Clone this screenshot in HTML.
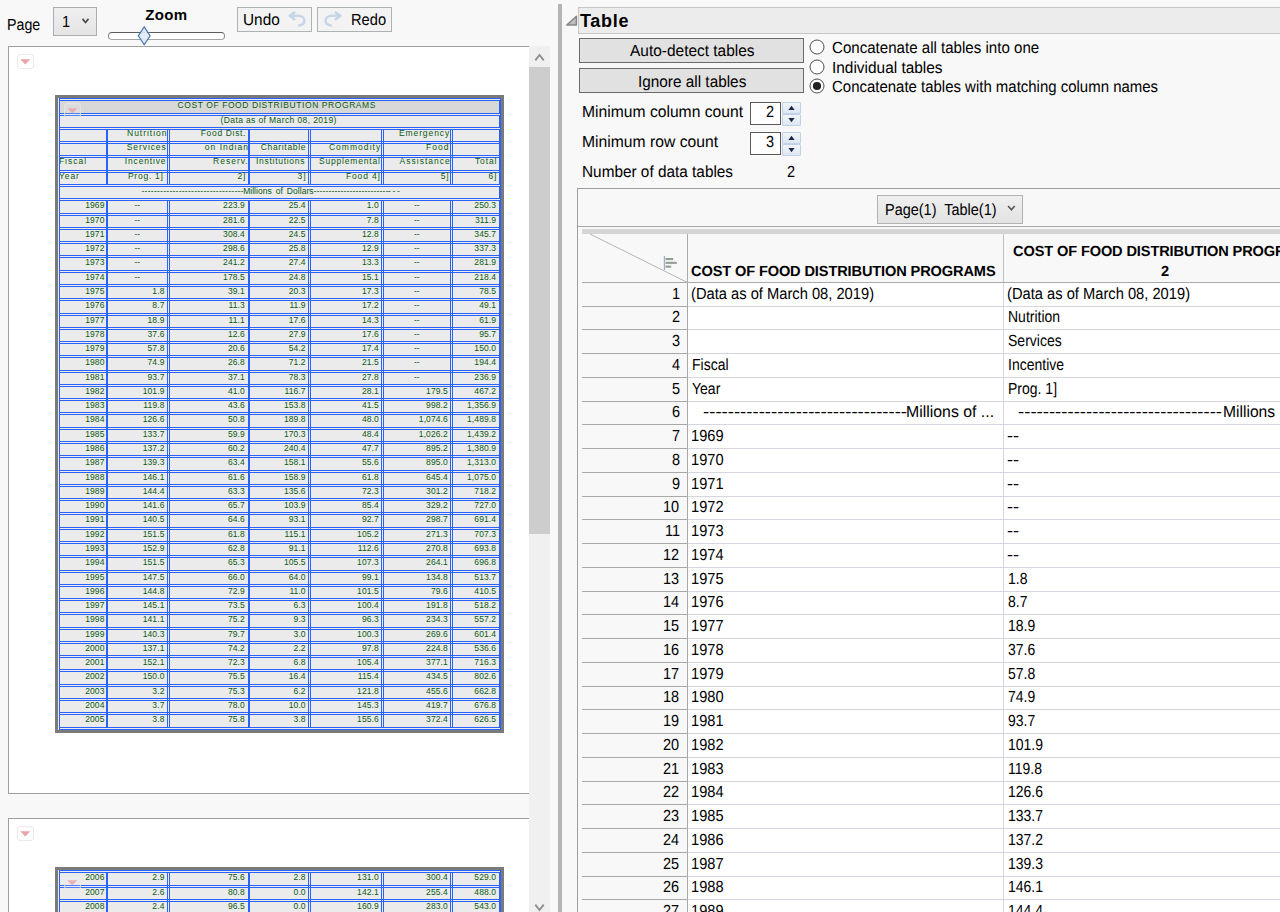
<!DOCTYPE html>
<html><head><meta charset="utf-8"><title>Table</title><style>
html,body{margin:0;padding:0}
body{width:1280px;height:912px;overflow:hidden;position:relative;background:#f8f8f8;font-family:'Liberation Sans', sans-serif;color:#000}
div,span,svg{position:absolute;box-sizing:border-box}
.t{white-space:pre;line-height:20px;height:20px;font-size:14px}
.c{border:1px solid #2962ff}
.h{font-size:16.1px;transform-origin:0 0}
.g{color:#0b5a14;font-size:8.5px}
</style></head><body>
<span class="t h" style="left:7.23px;top:13.52px;transform:scaleX(0.8855) skewX(.05deg);">Page</span>
<div style="left:53px;top:7px;width:44px;height:29px;border:1px solid #adadad;background:linear-gradient(#efefef,#e4e4e4)"></div>
<span class="t h" style="left:61.80px;top:11.32px;transform:scaleX(0.9006) skewX(.05deg);">1</span>
<svg style="left:81px;top:16.6px" width="10" height="8" viewBox="0 0 10 8"><path d="M1.5 1.9 L4.5 5.5 L7.5 1.9" fill="none" stroke="#4a4a4a" stroke-width="1.7"/></svg>
<span class="t" style="left:145.18px;top:4.80px;font-size:15px;font-weight:700;letter-spacing:0.357px;">Zoom</span>
<div style="left:108px;top:32px;width:117px;height:8px;border:1.5px solid #858585;border-top:1.2px solid #5c5c5c;border-bottom:1.8px solid #a4a4a4;border-radius:4px;background:#fff"></div>
<svg style="left:136px;top:25px" width="16" height="22" viewBox="0 0 16 22"><path d="M8.2 1.9 L14.1 10.8 L8.2 19.6 L2.3 10.8 Z" fill="#dfeaf8" fill-opacity="0.92" stroke="#4f7ab0" stroke-width="1.2"/></svg>
<div style="left:237px;top:7px;width:75px;height:25px;border:1px solid #adb2b5;background:#f3f3f3"></div>
<span class="t h" style="left:242.53px;top:9.42px;transform:scaleX(0.9547) skewX(.05deg);">Undo</span>
<svg style="left:287px;top:10px" width="20" height="18" viewBox="0 0 20 18"><path d="M7.3 2.4 L2.6 5.8 L7.3 9.3 M3.2 5.8 L11.4 5.8 C15 5.8 17.4 7.8 17.4 10.6 C17.4 13.2 15.2 15.1 12 15.5" fill="none" stroke="#c7d6e6" stroke-width="2.5" stroke-linecap="round" stroke-linejoin="round"/></svg>
<div style="left:317px;top:7px;width:75px;height:25px;border:1px solid #adb2b5;background:#f3f3f3"></div>
<svg style="left:323px;top:10px" width="20" height="18" viewBox="0 0 20 18"><g transform="translate(20 0) scale(-1 1)"><path d="M7.3 2.4 L2.6 5.8 L7.3 9.3 M3.2 5.8 L11.4 5.8 C15 5.8 17.4 7.8 17.4 10.6 C17.4 13.2 15.2 15.1 12 15.5" fill="none" stroke="#c7d6e6" stroke-width="2.5" stroke-linecap="round" stroke-linejoin="round"/></g></svg>
<span class="t h" style="left:350.73px;top:9.42px;transform:scaleX(0.9105) skewX(.05deg);">Redo</span>
<div style="left:0;top:0;width:529px;height:912px;overflow:hidden">
<div style="left:8px;top:46px;width:560px;height:748px;border:1px solid #a0a0a0;background:#fff"></div>
<div style="left:17px;top:54px;width:17px;height:15px;border:1px solid #e9e9e9;border-radius:3px;background:#fff;opacity:1.0"></div>
<svg style="left:20px;top:59px;opacity:1.0" width="11" height="6" viewBox="0 0 11 6"><path d="M0.3 0.3 L10.3 0.3 L5.3 5.6 Z" fill="#e9a3a9"/></svg>
<div style="left:55px;top:95px;width:449px;height:638px;background:#7a7a7a"></div>
<div style="left:58px;top:98px;width:443px;height:632px;background:#ebebeb"></div>
<div class="c" style="left:59px;top:98px;width:442px;height:632px"></div>
<div class="c" style="left:59px;top:100px;width:441px;height:14px;background:#d8d8d8;"></div>
<span class="t g" style="left:177.53px;top:95.15px;letter-spacing:0.579px;">COST OF FOOD DISTRIBUTION PROGRAMS</span>
<div class="c" style="left:59px;top:115px;width:441px;height:13px;"></div>
<span class="t g" style="left:220.53px;top:110.15px;letter-spacing:0.388px;">(Data as of March 08, 2019)</span>
<div class="c" style="left:59px;top:129px;width:441px;height:13px"></div>
<div class="c" style="left:59px;top:129px;width:48px;height:13px"></div>
<div class="c" style="left:107px;top:129px;width:61px;height:13px"></div>
<div class="c" style="left:169px;top:129px;width:80px;height:13px"></div>
<div class="c" style="left:249px;top:129px;width:60px;height:13px"></div>
<div class="c" style="left:310px;top:129px;width:72px;height:13px"></div>
<div class="c" style="left:383px;top:129px;width:68px;height:13px"></div>
<div class="c" style="left:452px;top:129px;width:48px;height:13px"></div>
<span class="t g" style="left:127.03px;top:123.05px;letter-spacing:0.972px;">Nutrition</span>
<span class="t g" style="left:200.78px;top:123.05px;letter-spacing:0.659px;">Food Dist.</span>
<span class="t g" style="left:398.93px;top:123.05px;letter-spacing:0.911px;">Emergency</span>
<div class="c" style="left:59px;top:143px;width:441px;height:13px"></div>
<div class="c" style="left:59px;top:143px;width:48px;height:13px"></div>
<div class="c" style="left:107px;top:143px;width:61px;height:13px"></div>
<div class="c" style="left:169px;top:143px;width:80px;height:13px"></div>
<div class="c" style="left:249px;top:143px;width:60px;height:13px"></div>
<div class="c" style="left:310px;top:143px;width:72px;height:13px"></div>
<div class="c" style="left:383px;top:143px;width:68px;height:13px"></div>
<div class="c" style="left:452px;top:143px;width:48px;height:13px"></div>
<span class="t g" style="left:126.73px;top:137.05px;letter-spacing:0.920px;">Services</span>
<span class="t g" style="left:204.78px;top:137.05px;letter-spacing:1.025px;">on Indian</span>
<span class="t g" style="left:260.78px;top:137.05px;letter-spacing:0.659px;">Charitable</span>
<span class="t g" style="left:328.93px;top:137.05px;letter-spacing:1.038px;">Commodity</span>
<span class="t g" style="left:426.03px;top:137.05px;letter-spacing:1.053px;">Food</span>
<div class="c" style="left:59px;top:157px;width:441px;height:14px"></div>
<div class="c" style="left:59px;top:157px;width:48px;height:14px"></div>
<div class="c" style="left:107px;top:157px;width:61px;height:14px"></div>
<div class="c" style="left:169px;top:157px;width:80px;height:14px"></div>
<div class="c" style="left:249px;top:157px;width:60px;height:14px"></div>
<div class="c" style="left:310px;top:157px;width:72px;height:14px"></div>
<div class="c" style="left:383px;top:157px;width:68px;height:14px"></div>
<div class="c" style="left:452px;top:157px;width:48px;height:14px"></div>
<span class="t g" style="left:58.93px;top:151.05px;letter-spacing:0.986px;">Fiscal</span>
<span class="t g" style="left:124.83px;top:151.05px;letter-spacing:0.825px;">Incentive</span>
<span class="t g" style="left:213.03px;top:151.05px;letter-spacing:1.005px;">Reserv.</span>
<span class="t g" style="left:256.03px;top:151.05px;letter-spacing:0.709px;">Institutions</span>
<span class="t g" style="left:318.93px;top:151.05px;letter-spacing:0.814px;">Supplemental</span>
<span class="t g" style="left:399.53px;top:151.05px;letter-spacing:1.025px;">Assistance</span>
<span class="t g" style="left:474.93px;top:151.05px;letter-spacing:0.892px;">Total</span>
<div class="c" style="left:59px;top:172px;width:441px;height:13px"></div>
<div class="c" style="left:59px;top:172px;width:48px;height:13px"></div>
<div class="c" style="left:107px;top:172px;width:61px;height:13px"></div>
<div class="c" style="left:169px;top:172px;width:80px;height:13px"></div>
<div class="c" style="left:249px;top:172px;width:60px;height:13px"></div>
<div class="c" style="left:310px;top:172px;width:72px;height:13px"></div>
<div class="c" style="left:383px;top:172px;width:68px;height:13px"></div>
<div class="c" style="left:452px;top:172px;width:48px;height:13px"></div>
<span class="t g" style="left:58.93px;top:166.05px;letter-spacing:0.949px;">Year</span>
<span class="t g" style="left:127.93px;top:166.05px;letter-spacing:0.751px;">Prog. 1]</span>
<span class="t g" style="left:237.53px;top:166.05px;letter-spacing:0.841px;">2]</span>
<span class="t g" style="left:297.53px;top:166.05px;letter-spacing:1.091px;">3]</span>
<span class="t g" style="left:346.03px;top:166.05px;letter-spacing:0.834px;">Food 4]</span>
<span class="t g" style="left:440.78px;top:166.05px;letter-spacing:0.691px;">5]</span>
<span class="t g" style="left:488.53px;top:166.05px;letter-spacing:0.841px;">6]</span>
<div class="c" style="left:59px;top:186px;width:441px;height:13px;"></div>
<div style="left:59px;top:129px;width:48px;height:56px;border-left:1px solid #2962ff;border-right:1px solid #2962ff"></div>
<div style="left:107px;top:129px;width:61px;height:56px;border-left:1px solid #2962ff;border-right:1px solid #2962ff"></div>
<div style="left:169px;top:129px;width:80px;height:56px;border-left:1px solid #2962ff;border-right:1px solid #2962ff"></div>
<div style="left:249px;top:129px;width:60px;height:56px;border-left:1px solid #2962ff;border-right:1px solid #2962ff"></div>
<div style="left:310px;top:129px;width:72px;height:56px;border-left:1px solid #2962ff;border-right:1px solid #2962ff"></div>
<div style="left:383px;top:129px;width:68px;height:56px;border-left:1px solid #2962ff;border-right:1px solid #2962ff"></div>
<div style="left:452px;top:129px;width:48px;height:56px;border-left:1px solid #2962ff;border-right:1px solid #2962ff"></div>
<div style="left:59px;top:200px;width:48px;height:528px;border-left:1px solid #2962ff;border-right:1px solid #2962ff"></div>
<div style="left:107px;top:200px;width:61px;height:528px;border-left:1px solid #2962ff;border-right:1px solid #2962ff"></div>
<div style="left:169px;top:200px;width:80px;height:528px;border-left:1px solid #2962ff;border-right:1px solid #2962ff"></div>
<div style="left:249px;top:200px;width:60px;height:528px;border-left:1px solid #2962ff;border-right:1px solid #2962ff"></div>
<div style="left:310px;top:200px;width:72px;height:528px;border-left:1px solid #2962ff;border-right:1px solid #2962ff"></div>
<div style="left:383px;top:200px;width:68px;height:528px;border-left:1px solid #2962ff;border-right:1px solid #2962ff"></div>
<div style="left:452px;top:200px;width:48px;height:528px;border-left:1px solid #2962ff;border-right:1px solid #2962ff"></div>
<div class="c" style="left:59px;top:200px;width:441px;height:14px"></div>
<div class="c" style="left:59px;top:200px;width:48px;height:14px"></div>
<div class="c" style="left:107px;top:200px;width:61px;height:14px"></div>
<div class="c" style="left:169px;top:200px;width:80px;height:14px"></div>
<div class="c" style="left:249px;top:200px;width:60px;height:14px"></div>
<div class="c" style="left:310px;top:200px;width:72px;height:14px"></div>
<div class="c" style="left:383px;top:200px;width:68px;height:14px"></div>
<div class="c" style="left:452px;top:200px;width:48px;height:14px"></div>
<span class="t g" style="left:85.18px;top:194.65px;letter-spacing:0.100px;">1969</span>
<span class="t g" style="left:134.46px;top:194.65px;">--</span>
<span class="t g" style="left:223.12px;top:194.65px;letter-spacing:0.100px;">223.9</span>
<span class="t g" style="left:288.75px;top:194.65px;letter-spacing:0.100px;">25.4</span>
<span class="t g" style="left:366.77px;top:194.65px;letter-spacing:0.100px;">1.0</span>
<span class="t g" style="left:413.96px;top:194.65px;">--</span>
<span class="t g" style="left:474.32px;top:194.65px;letter-spacing:0.100px;">250.3</span>
<div class="c" style="left:59px;top:215px;width:441px;height:13px"></div>
<div class="c" style="left:59px;top:215px;width:48px;height:13px"></div>
<div class="c" style="left:107px;top:215px;width:61px;height:13px"></div>
<div class="c" style="left:169px;top:215px;width:80px;height:13px"></div>
<div class="c" style="left:249px;top:215px;width:60px;height:13px"></div>
<div class="c" style="left:310px;top:215px;width:72px;height:13px"></div>
<div class="c" style="left:383px;top:215px;width:68px;height:13px"></div>
<div class="c" style="left:452px;top:215px;width:48px;height:13px"></div>
<span class="t g" style="left:85.18px;top:209.65px;letter-spacing:0.100px;">1970</span>
<span class="t g" style="left:134.46px;top:209.65px;">--</span>
<span class="t g" style="left:223.12px;top:209.65px;letter-spacing:0.100px;">281.6</span>
<span class="t g" style="left:288.75px;top:209.65px;letter-spacing:0.100px;">22.5</span>
<span class="t g" style="left:366.77px;top:209.65px;letter-spacing:0.100px;">7.8</span>
<span class="t g" style="left:413.96px;top:209.65px;">--</span>
<span class="t g" style="left:474.96px;top:209.65px;letter-spacing:0.100px;">311.9</span>
<div class="c" style="left:59px;top:229px;width:441px;height:13px"></div>
<div class="c" style="left:59px;top:229px;width:48px;height:13px"></div>
<div class="c" style="left:107px;top:229px;width:61px;height:13px"></div>
<div class="c" style="left:169px;top:229px;width:80px;height:13px"></div>
<div class="c" style="left:249px;top:229px;width:60px;height:13px"></div>
<div class="c" style="left:310px;top:229px;width:72px;height:13px"></div>
<div class="c" style="left:383px;top:229px;width:68px;height:13px"></div>
<div class="c" style="left:452px;top:229px;width:48px;height:13px"></div>
<span class="t g" style="left:85.18px;top:223.65px;letter-spacing:0.100px;">1971</span>
<span class="t g" style="left:134.46px;top:223.65px;">--</span>
<span class="t g" style="left:223.12px;top:223.65px;letter-spacing:0.100px;">308.4</span>
<span class="t g" style="left:288.75px;top:223.65px;letter-spacing:0.100px;">24.5</span>
<span class="t g" style="left:361.95px;top:223.65px;letter-spacing:0.100px;">12.8</span>
<span class="t g" style="left:413.96px;top:223.65px;">--</span>
<span class="t g" style="left:474.32px;top:223.65px;letter-spacing:0.100px;">345.7</span>
<div class="c" style="left:59px;top:243px;width:441px;height:13px"></div>
<div class="c" style="left:59px;top:243px;width:48px;height:13px"></div>
<div class="c" style="left:107px;top:243px;width:61px;height:13px"></div>
<div class="c" style="left:169px;top:243px;width:80px;height:13px"></div>
<div class="c" style="left:249px;top:243px;width:60px;height:13px"></div>
<div class="c" style="left:310px;top:243px;width:72px;height:13px"></div>
<div class="c" style="left:383px;top:243px;width:68px;height:13px"></div>
<div class="c" style="left:452px;top:243px;width:48px;height:13px"></div>
<span class="t g" style="left:85.18px;top:237.65px;letter-spacing:0.100px;">1972</span>
<span class="t g" style="left:134.46px;top:237.65px;">--</span>
<span class="t g" style="left:223.12px;top:237.65px;letter-spacing:0.100px;">298.6</span>
<span class="t g" style="left:288.75px;top:237.65px;letter-spacing:0.100px;">25.8</span>
<span class="t g" style="left:361.95px;top:237.65px;letter-spacing:0.100px;">12.9</span>
<span class="t g" style="left:413.96px;top:237.65px;">--</span>
<span class="t g" style="left:474.32px;top:237.65px;letter-spacing:0.100px;">337.3</span>
<div class="c" style="left:59px;top:257px;width:441px;height:14px"></div>
<div class="c" style="left:59px;top:257px;width:48px;height:14px"></div>
<div class="c" style="left:107px;top:257px;width:61px;height:14px"></div>
<div class="c" style="left:169px;top:257px;width:80px;height:14px"></div>
<div class="c" style="left:249px;top:257px;width:60px;height:14px"></div>
<div class="c" style="left:310px;top:257px;width:72px;height:14px"></div>
<div class="c" style="left:383px;top:257px;width:68px;height:14px"></div>
<div class="c" style="left:452px;top:257px;width:48px;height:14px"></div>
<span class="t g" style="left:85.18px;top:251.65px;letter-spacing:0.100px;">1973</span>
<span class="t g" style="left:134.46px;top:251.65px;">--</span>
<span class="t g" style="left:223.12px;top:251.65px;letter-spacing:0.100px;">241.2</span>
<span class="t g" style="left:288.75px;top:251.65px;letter-spacing:0.100px;">27.4</span>
<span class="t g" style="left:361.95px;top:251.65px;letter-spacing:0.100px;">13.3</span>
<span class="t g" style="left:413.96px;top:251.65px;">--</span>
<span class="t g" style="left:474.32px;top:251.65px;letter-spacing:0.100px;">281.9</span>
<div class="c" style="left:59px;top:272px;width:441px;height:13px"></div>
<div class="c" style="left:59px;top:272px;width:48px;height:13px"></div>
<div class="c" style="left:107px;top:272px;width:61px;height:13px"></div>
<div class="c" style="left:169px;top:272px;width:80px;height:13px"></div>
<div class="c" style="left:249px;top:272px;width:60px;height:13px"></div>
<div class="c" style="left:310px;top:272px;width:72px;height:13px"></div>
<div class="c" style="left:383px;top:272px;width:68px;height:13px"></div>
<div class="c" style="left:452px;top:272px;width:48px;height:13px"></div>
<span class="t g" style="left:85.18px;top:266.65px;letter-spacing:0.100px;">1974</span>
<span class="t g" style="left:134.46px;top:266.65px;">--</span>
<span class="t g" style="left:223.12px;top:266.65px;letter-spacing:0.100px;">178.5</span>
<span class="t g" style="left:288.75px;top:266.65px;letter-spacing:0.100px;">24.8</span>
<span class="t g" style="left:361.95px;top:266.65px;letter-spacing:0.100px;">15.1</span>
<span class="t g" style="left:413.96px;top:266.65px;">--</span>
<span class="t g" style="left:474.32px;top:266.65px;letter-spacing:0.100px;">218.4</span>
<div class="c" style="left:59px;top:286px;width:441px;height:13px"></div>
<div class="c" style="left:59px;top:286px;width:48px;height:13px"></div>
<div class="c" style="left:107px;top:286px;width:61px;height:13px"></div>
<div class="c" style="left:169px;top:286px;width:80px;height:13px"></div>
<div class="c" style="left:249px;top:286px;width:60px;height:13px"></div>
<div class="c" style="left:310px;top:286px;width:72px;height:13px"></div>
<div class="c" style="left:383px;top:286px;width:68px;height:13px"></div>
<div class="c" style="left:452px;top:286px;width:48px;height:13px"></div>
<span class="t g" style="left:85.18px;top:280.65px;letter-spacing:0.100px;">1975</span>
<span class="t g" style="left:152.37px;top:280.65px;letter-spacing:0.100px;">1.8</span>
<span class="t g" style="left:227.95px;top:280.65px;letter-spacing:0.100px;">39.1</span>
<span class="t g" style="left:288.75px;top:280.65px;letter-spacing:0.100px;">20.3</span>
<span class="t g" style="left:361.95px;top:280.65px;letter-spacing:0.100px;">17.3</span>
<span class="t g" style="left:413.96px;top:280.65px;">--</span>
<span class="t g" style="left:479.15px;top:280.65px;letter-spacing:0.100px;">78.5</span>
<div class="c" style="left:59px;top:300px;width:441px;height:14px"></div>
<div class="c" style="left:59px;top:300px;width:48px;height:14px"></div>
<div class="c" style="left:107px;top:300px;width:61px;height:14px"></div>
<div class="c" style="left:169px;top:300px;width:80px;height:14px"></div>
<div class="c" style="left:249px;top:300px;width:60px;height:14px"></div>
<div class="c" style="left:310px;top:300px;width:72px;height:14px"></div>
<div class="c" style="left:383px;top:300px;width:68px;height:14px"></div>
<div class="c" style="left:452px;top:300px;width:48px;height:14px"></div>
<span class="t g" style="left:85.18px;top:294.65px;letter-spacing:0.100px;">1976</span>
<span class="t g" style="left:152.37px;top:294.65px;letter-spacing:0.100px;">8.7</span>
<span class="t g" style="left:228.58px;top:294.65px;letter-spacing:0.100px;">11.3</span>
<span class="t g" style="left:289.38px;top:294.65px;letter-spacing:0.100px;">11.9</span>
<span class="t g" style="left:361.95px;top:294.65px;letter-spacing:0.100px;">17.2</span>
<span class="t g" style="left:413.96px;top:294.65px;">--</span>
<span class="t g" style="left:479.15px;top:294.65px;letter-spacing:0.100px;">49.1</span>
<div class="c" style="left:59px;top:315px;width:441px;height:13px"></div>
<div class="c" style="left:59px;top:315px;width:48px;height:13px"></div>
<div class="c" style="left:107px;top:315px;width:61px;height:13px"></div>
<div class="c" style="left:169px;top:315px;width:80px;height:13px"></div>
<div class="c" style="left:249px;top:315px;width:60px;height:13px"></div>
<div class="c" style="left:310px;top:315px;width:72px;height:13px"></div>
<div class="c" style="left:383px;top:315px;width:68px;height:13px"></div>
<div class="c" style="left:452px;top:315px;width:48px;height:13px"></div>
<span class="t g" style="left:85.18px;top:309.65px;letter-spacing:0.100px;">1977</span>
<span class="t g" style="left:147.55px;top:309.65px;letter-spacing:0.100px;">18.9</span>
<span class="t g" style="left:228.58px;top:309.65px;letter-spacing:0.100px;">11.1</span>
<span class="t g" style="left:288.75px;top:309.65px;letter-spacing:0.100px;">17.6</span>
<span class="t g" style="left:361.95px;top:309.65px;letter-spacing:0.100px;">14.3</span>
<span class="t g" style="left:413.96px;top:309.65px;">--</span>
<span class="t g" style="left:479.15px;top:309.65px;letter-spacing:0.100px;">61.9</span>
<div class="c" style="left:59px;top:329px;width:441px;height:13px"></div>
<div class="c" style="left:59px;top:329px;width:48px;height:13px"></div>
<div class="c" style="left:107px;top:329px;width:61px;height:13px"></div>
<div class="c" style="left:169px;top:329px;width:80px;height:13px"></div>
<div class="c" style="left:249px;top:329px;width:60px;height:13px"></div>
<div class="c" style="left:310px;top:329px;width:72px;height:13px"></div>
<div class="c" style="left:383px;top:329px;width:68px;height:13px"></div>
<div class="c" style="left:452px;top:329px;width:48px;height:13px"></div>
<span class="t g" style="left:85.18px;top:323.65px;letter-spacing:0.100px;">1978</span>
<span class="t g" style="left:147.55px;top:323.65px;letter-spacing:0.100px;">37.6</span>
<span class="t g" style="left:227.95px;top:323.65px;letter-spacing:0.100px;">12.6</span>
<span class="t g" style="left:288.75px;top:323.65px;letter-spacing:0.100px;">27.9</span>
<span class="t g" style="left:361.95px;top:323.65px;letter-spacing:0.100px;">17.6</span>
<span class="t g" style="left:413.96px;top:323.65px;">--</span>
<span class="t g" style="left:479.15px;top:323.65px;letter-spacing:0.100px;">95.7</span>
<div class="c" style="left:59px;top:343px;width:441px;height:13px"></div>
<div class="c" style="left:59px;top:343px;width:48px;height:13px"></div>
<div class="c" style="left:107px;top:343px;width:61px;height:13px"></div>
<div class="c" style="left:169px;top:343px;width:80px;height:13px"></div>
<div class="c" style="left:249px;top:343px;width:60px;height:13px"></div>
<div class="c" style="left:310px;top:343px;width:72px;height:13px"></div>
<div class="c" style="left:383px;top:343px;width:68px;height:13px"></div>
<div class="c" style="left:452px;top:343px;width:48px;height:13px"></div>
<span class="t g" style="left:85.18px;top:337.65px;letter-spacing:0.100px;">1979</span>
<span class="t g" style="left:147.55px;top:337.65px;letter-spacing:0.100px;">57.8</span>
<span class="t g" style="left:227.95px;top:337.65px;letter-spacing:0.100px;">20.6</span>
<span class="t g" style="left:288.75px;top:337.65px;letter-spacing:0.100px;">54.2</span>
<span class="t g" style="left:361.95px;top:337.65px;letter-spacing:0.100px;">17.4</span>
<span class="t g" style="left:413.96px;top:337.65px;">--</span>
<span class="t g" style="left:474.32px;top:337.65px;letter-spacing:0.100px;">150.0</span>
<div class="c" style="left:59px;top:357px;width:441px;height:14px"></div>
<div class="c" style="left:59px;top:357px;width:48px;height:14px"></div>
<div class="c" style="left:107px;top:357px;width:61px;height:14px"></div>
<div class="c" style="left:169px;top:357px;width:80px;height:14px"></div>
<div class="c" style="left:249px;top:357px;width:60px;height:14px"></div>
<div class="c" style="left:310px;top:357px;width:72px;height:14px"></div>
<div class="c" style="left:383px;top:357px;width:68px;height:14px"></div>
<div class="c" style="left:452px;top:357px;width:48px;height:14px"></div>
<span class="t g" style="left:85.18px;top:351.65px;letter-spacing:0.100px;">1980</span>
<span class="t g" style="left:147.55px;top:351.65px;letter-spacing:0.100px;">74.9</span>
<span class="t g" style="left:227.95px;top:351.65px;letter-spacing:0.100px;">26.8</span>
<span class="t g" style="left:288.75px;top:351.65px;letter-spacing:0.100px;">71.2</span>
<span class="t g" style="left:361.95px;top:351.65px;letter-spacing:0.100px;">21.5</span>
<span class="t g" style="left:413.96px;top:351.65px;">--</span>
<span class="t g" style="left:474.32px;top:351.65px;letter-spacing:0.100px;">194.4</span>
<div class="c" style="left:59px;top:372px;width:441px;height:13px"></div>
<div class="c" style="left:59px;top:372px;width:48px;height:13px"></div>
<div class="c" style="left:107px;top:372px;width:61px;height:13px"></div>
<div class="c" style="left:169px;top:372px;width:80px;height:13px"></div>
<div class="c" style="left:249px;top:372px;width:60px;height:13px"></div>
<div class="c" style="left:310px;top:372px;width:72px;height:13px"></div>
<div class="c" style="left:383px;top:372px;width:68px;height:13px"></div>
<div class="c" style="left:452px;top:372px;width:48px;height:13px"></div>
<span class="t g" style="left:85.18px;top:366.65px;letter-spacing:0.100px;">1981</span>
<span class="t g" style="left:147.55px;top:366.65px;letter-spacing:0.100px;">93.7</span>
<span class="t g" style="left:227.95px;top:366.65px;letter-spacing:0.100px;">37.1</span>
<span class="t g" style="left:288.75px;top:366.65px;letter-spacing:0.100px;">78.3</span>
<span class="t g" style="left:361.95px;top:366.65px;letter-spacing:0.100px;">27.8</span>
<span class="t g" style="left:413.96px;top:366.65px;">--</span>
<span class="t g" style="left:474.32px;top:366.65px;letter-spacing:0.100px;">236.9</span>
<div class="c" style="left:59px;top:386px;width:441px;height:13px"></div>
<div class="c" style="left:59px;top:386px;width:48px;height:13px"></div>
<div class="c" style="left:107px;top:386px;width:61px;height:13px"></div>
<div class="c" style="left:169px;top:386px;width:80px;height:13px"></div>
<div class="c" style="left:249px;top:386px;width:60px;height:13px"></div>
<div class="c" style="left:310px;top:386px;width:72px;height:13px"></div>
<div class="c" style="left:383px;top:386px;width:68px;height:13px"></div>
<div class="c" style="left:452px;top:386px;width:48px;height:13px"></div>
<span class="t g" style="left:85.18px;top:380.65px;letter-spacing:0.100px;">1982</span>
<span class="t g" style="left:142.72px;top:380.65px;letter-spacing:0.100px;">101.9</span>
<span class="t g" style="left:227.95px;top:380.65px;letter-spacing:0.100px;">41.0</span>
<span class="t g" style="left:284.56px;top:380.65px;letter-spacing:0.100px;">116.7</span>
<span class="t g" style="left:361.95px;top:380.65px;letter-spacing:0.100px;">28.1</span>
<span class="t g" style="left:426.12px;top:380.65px;letter-spacing:0.100px;">179.5</span>
<span class="t g" style="left:474.32px;top:380.65px;letter-spacing:0.100px;">467.2</span>
<div class="c" style="left:59px;top:400px;width:441px;height:13px"></div>
<div class="c" style="left:59px;top:400px;width:48px;height:13px"></div>
<div class="c" style="left:107px;top:400px;width:61px;height:13px"></div>
<div class="c" style="left:169px;top:400px;width:80px;height:13px"></div>
<div class="c" style="left:249px;top:400px;width:60px;height:13px"></div>
<div class="c" style="left:310px;top:400px;width:72px;height:13px"></div>
<div class="c" style="left:383px;top:400px;width:68px;height:13px"></div>
<div class="c" style="left:452px;top:400px;width:48px;height:13px"></div>
<span class="t g" style="left:85.18px;top:394.65px;letter-spacing:0.100px;">1983</span>
<span class="t g" style="left:143.36px;top:394.65px;letter-spacing:0.100px;">119.8</span>
<span class="t g" style="left:227.95px;top:394.65px;letter-spacing:0.100px;">43.6</span>
<span class="t g" style="left:283.92px;top:394.65px;letter-spacing:0.100px;">153.8</span>
<span class="t g" style="left:361.95px;top:394.65px;letter-spacing:0.100px;">41.5</span>
<span class="t g" style="left:426.12px;top:394.65px;letter-spacing:0.100px;">998.2</span>
<span class="t g" style="left:467.02px;top:394.65px;letter-spacing:0.100px;">1,356.9</span>
<div class="c" style="left:59px;top:414px;width:441px;height:14px"></div>
<div class="c" style="left:59px;top:414px;width:48px;height:14px"></div>
<div class="c" style="left:107px;top:414px;width:61px;height:14px"></div>
<div class="c" style="left:169px;top:414px;width:80px;height:14px"></div>
<div class="c" style="left:249px;top:414px;width:60px;height:14px"></div>
<div class="c" style="left:310px;top:414px;width:72px;height:14px"></div>
<div class="c" style="left:383px;top:414px;width:68px;height:14px"></div>
<div class="c" style="left:452px;top:414px;width:48px;height:14px"></div>
<span class="t g" style="left:85.18px;top:408.65px;letter-spacing:0.100px;">1984</span>
<span class="t g" style="left:142.72px;top:408.65px;letter-spacing:0.100px;">126.6</span>
<span class="t g" style="left:227.95px;top:408.65px;letter-spacing:0.100px;">50.8</span>
<span class="t g" style="left:283.92px;top:408.65px;letter-spacing:0.100px;">189.8</span>
<span class="t g" style="left:361.95px;top:408.65px;letter-spacing:0.100px;">48.0</span>
<span class="t g" style="left:418.82px;top:408.65px;letter-spacing:0.100px;">1,074.6</span>
<span class="t g" style="left:467.02px;top:408.65px;letter-spacing:0.100px;">1,489.8</span>
<div class="c" style="left:59px;top:429px;width:441px;height:13px"></div>
<div class="c" style="left:59px;top:429px;width:48px;height:13px"></div>
<div class="c" style="left:107px;top:429px;width:61px;height:13px"></div>
<div class="c" style="left:169px;top:429px;width:80px;height:13px"></div>
<div class="c" style="left:249px;top:429px;width:60px;height:13px"></div>
<div class="c" style="left:310px;top:429px;width:72px;height:13px"></div>
<div class="c" style="left:383px;top:429px;width:68px;height:13px"></div>
<div class="c" style="left:452px;top:429px;width:48px;height:13px"></div>
<span class="t g" style="left:85.18px;top:423.65px;letter-spacing:0.100px;">1985</span>
<span class="t g" style="left:142.72px;top:423.65px;letter-spacing:0.100px;">133.7</span>
<span class="t g" style="left:227.95px;top:423.65px;letter-spacing:0.100px;">59.9</span>
<span class="t g" style="left:283.92px;top:423.65px;letter-spacing:0.100px;">170.3</span>
<span class="t g" style="left:361.95px;top:423.65px;letter-spacing:0.100px;">48.4</span>
<span class="t g" style="left:418.82px;top:423.65px;letter-spacing:0.100px;">1,026.2</span>
<span class="t g" style="left:467.02px;top:423.65px;letter-spacing:0.100px;">1,439.2</span>
<div class="c" style="left:59px;top:443px;width:441px;height:13px"></div>
<div class="c" style="left:59px;top:443px;width:48px;height:13px"></div>
<div class="c" style="left:107px;top:443px;width:61px;height:13px"></div>
<div class="c" style="left:169px;top:443px;width:80px;height:13px"></div>
<div class="c" style="left:249px;top:443px;width:60px;height:13px"></div>
<div class="c" style="left:310px;top:443px;width:72px;height:13px"></div>
<div class="c" style="left:383px;top:443px;width:68px;height:13px"></div>
<div class="c" style="left:452px;top:443px;width:48px;height:13px"></div>
<span class="t g" style="left:85.18px;top:437.65px;letter-spacing:0.100px;">1986</span>
<span class="t g" style="left:142.72px;top:437.65px;letter-spacing:0.100px;">137.2</span>
<span class="t g" style="left:227.95px;top:437.65px;letter-spacing:0.100px;">60.2</span>
<span class="t g" style="left:283.92px;top:437.65px;letter-spacing:0.100px;">240.4</span>
<span class="t g" style="left:361.95px;top:437.65px;letter-spacing:0.100px;">47.7</span>
<span class="t g" style="left:426.12px;top:437.65px;letter-spacing:0.100px;">895.2</span>
<span class="t g" style="left:467.02px;top:437.65px;letter-spacing:0.100px;">1,380.9</span>
<div class="c" style="left:59px;top:457px;width:441px;height:14px"></div>
<div class="c" style="left:59px;top:457px;width:48px;height:14px"></div>
<div class="c" style="left:107px;top:457px;width:61px;height:14px"></div>
<div class="c" style="left:169px;top:457px;width:80px;height:14px"></div>
<div class="c" style="left:249px;top:457px;width:60px;height:14px"></div>
<div class="c" style="left:310px;top:457px;width:72px;height:14px"></div>
<div class="c" style="left:383px;top:457px;width:68px;height:14px"></div>
<div class="c" style="left:452px;top:457px;width:48px;height:14px"></div>
<span class="t g" style="left:85.18px;top:451.65px;letter-spacing:0.100px;">1987</span>
<span class="t g" style="left:142.72px;top:451.65px;letter-spacing:0.100px;">139.3</span>
<span class="t g" style="left:227.95px;top:451.65px;letter-spacing:0.100px;">63.4</span>
<span class="t g" style="left:283.92px;top:451.65px;letter-spacing:0.100px;">158.1</span>
<span class="t g" style="left:361.95px;top:451.65px;letter-spacing:0.100px;">55.6</span>
<span class="t g" style="left:426.12px;top:451.65px;letter-spacing:0.100px;">895.0</span>
<span class="t g" style="left:467.02px;top:451.65px;letter-spacing:0.100px;">1,313.0</span>
<div class="c" style="left:59px;top:472px;width:441px;height:13px"></div>
<div class="c" style="left:59px;top:472px;width:48px;height:13px"></div>
<div class="c" style="left:107px;top:472px;width:61px;height:13px"></div>
<div class="c" style="left:169px;top:472px;width:80px;height:13px"></div>
<div class="c" style="left:249px;top:472px;width:60px;height:13px"></div>
<div class="c" style="left:310px;top:472px;width:72px;height:13px"></div>
<div class="c" style="left:383px;top:472px;width:68px;height:13px"></div>
<div class="c" style="left:452px;top:472px;width:48px;height:13px"></div>
<span class="t g" style="left:85.18px;top:466.65px;letter-spacing:0.100px;">1988</span>
<span class="t g" style="left:142.72px;top:466.65px;letter-spacing:0.100px;">146.1</span>
<span class="t g" style="left:227.95px;top:466.65px;letter-spacing:0.100px;">61.6</span>
<span class="t g" style="left:283.92px;top:466.65px;letter-spacing:0.100px;">158.9</span>
<span class="t g" style="left:361.95px;top:466.65px;letter-spacing:0.100px;">61.8</span>
<span class="t g" style="left:426.12px;top:466.65px;letter-spacing:0.100px;">645.4</span>
<span class="t g" style="left:467.02px;top:466.65px;letter-spacing:0.100px;">1,075.0</span>
<div class="c" style="left:59px;top:486px;width:441px;height:13px"></div>
<div class="c" style="left:59px;top:486px;width:48px;height:13px"></div>
<div class="c" style="left:107px;top:486px;width:61px;height:13px"></div>
<div class="c" style="left:169px;top:486px;width:80px;height:13px"></div>
<div class="c" style="left:249px;top:486px;width:60px;height:13px"></div>
<div class="c" style="left:310px;top:486px;width:72px;height:13px"></div>
<div class="c" style="left:383px;top:486px;width:68px;height:13px"></div>
<div class="c" style="left:452px;top:486px;width:48px;height:13px"></div>
<span class="t g" style="left:85.18px;top:480.65px;letter-spacing:0.100px;">1989</span>
<span class="t g" style="left:142.72px;top:480.65px;letter-spacing:0.100px;">144.4</span>
<span class="t g" style="left:227.95px;top:480.65px;letter-spacing:0.100px;">63.3</span>
<span class="t g" style="left:283.92px;top:480.65px;letter-spacing:0.100px;">135.6</span>
<span class="t g" style="left:361.95px;top:480.65px;letter-spacing:0.100px;">72.3</span>
<span class="t g" style="left:426.12px;top:480.65px;letter-spacing:0.100px;">301.2</span>
<span class="t g" style="left:474.32px;top:480.65px;letter-spacing:0.100px;">718.2</span>
<div class="c" style="left:59px;top:500px;width:441px;height:13px"></div>
<div class="c" style="left:59px;top:500px;width:48px;height:13px"></div>
<div class="c" style="left:107px;top:500px;width:61px;height:13px"></div>
<div class="c" style="left:169px;top:500px;width:80px;height:13px"></div>
<div class="c" style="left:249px;top:500px;width:60px;height:13px"></div>
<div class="c" style="left:310px;top:500px;width:72px;height:13px"></div>
<div class="c" style="left:383px;top:500px;width:68px;height:13px"></div>
<div class="c" style="left:452px;top:500px;width:48px;height:13px"></div>
<span class="t g" style="left:85.18px;top:494.65px;letter-spacing:0.100px;">1990</span>
<span class="t g" style="left:142.72px;top:494.65px;letter-spacing:0.100px;">141.6</span>
<span class="t g" style="left:227.95px;top:494.65px;letter-spacing:0.100px;">65.7</span>
<span class="t g" style="left:283.92px;top:494.65px;letter-spacing:0.100px;">103.9</span>
<span class="t g" style="left:361.95px;top:494.65px;letter-spacing:0.100px;">85.4</span>
<span class="t g" style="left:426.12px;top:494.65px;letter-spacing:0.100px;">329.2</span>
<span class="t g" style="left:474.32px;top:494.65px;letter-spacing:0.100px;">727.0</span>
<div class="c" style="left:59px;top:514px;width:441px;height:14px"></div>
<div class="c" style="left:59px;top:514px;width:48px;height:14px"></div>
<div class="c" style="left:107px;top:514px;width:61px;height:14px"></div>
<div class="c" style="left:169px;top:514px;width:80px;height:14px"></div>
<div class="c" style="left:249px;top:514px;width:60px;height:14px"></div>
<div class="c" style="left:310px;top:514px;width:72px;height:14px"></div>
<div class="c" style="left:383px;top:514px;width:68px;height:14px"></div>
<div class="c" style="left:452px;top:514px;width:48px;height:14px"></div>
<span class="t g" style="left:85.18px;top:508.65px;letter-spacing:0.100px;">1991</span>
<span class="t g" style="left:142.72px;top:508.65px;letter-spacing:0.100px;">140.5</span>
<span class="t g" style="left:227.95px;top:508.65px;letter-spacing:0.100px;">64.6</span>
<span class="t g" style="left:288.75px;top:508.65px;letter-spacing:0.100px;">93.1</span>
<span class="t g" style="left:361.95px;top:508.65px;letter-spacing:0.100px;">92.7</span>
<span class="t g" style="left:426.12px;top:508.65px;letter-spacing:0.100px;">298.7</span>
<span class="t g" style="left:474.32px;top:508.65px;letter-spacing:0.100px;">691.4</span>
<div class="c" style="left:59px;top:529px;width:441px;height:13px"></div>
<div class="c" style="left:59px;top:529px;width:48px;height:13px"></div>
<div class="c" style="left:107px;top:529px;width:61px;height:13px"></div>
<div class="c" style="left:169px;top:529px;width:80px;height:13px"></div>
<div class="c" style="left:249px;top:529px;width:60px;height:13px"></div>
<div class="c" style="left:310px;top:529px;width:72px;height:13px"></div>
<div class="c" style="left:383px;top:529px;width:68px;height:13px"></div>
<div class="c" style="left:452px;top:529px;width:48px;height:13px"></div>
<span class="t g" style="left:85.18px;top:523.65px;letter-spacing:0.100px;">1992</span>
<span class="t g" style="left:142.72px;top:523.65px;letter-spacing:0.100px;">151.5</span>
<span class="t g" style="left:227.95px;top:523.65px;letter-spacing:0.100px;">61.8</span>
<span class="t g" style="left:284.56px;top:523.65px;letter-spacing:0.100px;">115.1</span>
<span class="t g" style="left:357.12px;top:523.65px;letter-spacing:0.100px;">105.2</span>
<span class="t g" style="left:426.12px;top:523.65px;letter-spacing:0.100px;">271.3</span>
<span class="t g" style="left:474.32px;top:523.65px;letter-spacing:0.100px;">707.3</span>
<div class="c" style="left:59px;top:543px;width:441px;height:13px"></div>
<div class="c" style="left:59px;top:543px;width:48px;height:13px"></div>
<div class="c" style="left:107px;top:543px;width:61px;height:13px"></div>
<div class="c" style="left:169px;top:543px;width:80px;height:13px"></div>
<div class="c" style="left:249px;top:543px;width:60px;height:13px"></div>
<div class="c" style="left:310px;top:543px;width:72px;height:13px"></div>
<div class="c" style="left:383px;top:543px;width:68px;height:13px"></div>
<div class="c" style="left:452px;top:543px;width:48px;height:13px"></div>
<span class="t g" style="left:85.18px;top:537.65px;letter-spacing:0.100px;">1993</span>
<span class="t g" style="left:142.72px;top:537.65px;letter-spacing:0.100px;">152.9</span>
<span class="t g" style="left:227.95px;top:537.65px;letter-spacing:0.100px;">62.8</span>
<span class="t g" style="left:288.75px;top:537.65px;letter-spacing:0.100px;">91.1</span>
<span class="t g" style="left:357.76px;top:537.65px;letter-spacing:0.100px;">112.6</span>
<span class="t g" style="left:426.12px;top:537.65px;letter-spacing:0.100px;">270.8</span>
<span class="t g" style="left:474.32px;top:537.65px;letter-spacing:0.100px;">693.8</span>
<div class="c" style="left:59px;top:557px;width:441px;height:14px"></div>
<div class="c" style="left:59px;top:557px;width:48px;height:14px"></div>
<div class="c" style="left:107px;top:557px;width:61px;height:14px"></div>
<div class="c" style="left:169px;top:557px;width:80px;height:14px"></div>
<div class="c" style="left:249px;top:557px;width:60px;height:14px"></div>
<div class="c" style="left:310px;top:557px;width:72px;height:14px"></div>
<div class="c" style="left:383px;top:557px;width:68px;height:14px"></div>
<div class="c" style="left:452px;top:557px;width:48px;height:14px"></div>
<span class="t g" style="left:85.18px;top:551.65px;letter-spacing:0.100px;">1994</span>
<span class="t g" style="left:142.72px;top:551.65px;letter-spacing:0.100px;">151.5</span>
<span class="t g" style="left:227.95px;top:551.65px;letter-spacing:0.100px;">65.3</span>
<span class="t g" style="left:283.92px;top:551.65px;letter-spacing:0.100px;">105.5</span>
<span class="t g" style="left:357.12px;top:551.65px;letter-spacing:0.100px;">107.3</span>
<span class="t g" style="left:426.12px;top:551.65px;letter-spacing:0.100px;">264.1</span>
<span class="t g" style="left:474.32px;top:551.65px;letter-spacing:0.100px;">696.8</span>
<div class="c" style="left:59px;top:572px;width:441px;height:13px"></div>
<div class="c" style="left:59px;top:572px;width:48px;height:13px"></div>
<div class="c" style="left:107px;top:572px;width:61px;height:13px"></div>
<div class="c" style="left:169px;top:572px;width:80px;height:13px"></div>
<div class="c" style="left:249px;top:572px;width:60px;height:13px"></div>
<div class="c" style="left:310px;top:572px;width:72px;height:13px"></div>
<div class="c" style="left:383px;top:572px;width:68px;height:13px"></div>
<div class="c" style="left:452px;top:572px;width:48px;height:13px"></div>
<span class="t g" style="left:85.18px;top:566.65px;letter-spacing:0.100px;">1995</span>
<span class="t g" style="left:142.72px;top:566.65px;letter-spacing:0.100px;">147.5</span>
<span class="t g" style="left:227.95px;top:566.65px;letter-spacing:0.100px;">66.0</span>
<span class="t g" style="left:288.75px;top:566.65px;letter-spacing:0.100px;">64.0</span>
<span class="t g" style="left:361.95px;top:566.65px;letter-spacing:0.100px;">99.1</span>
<span class="t g" style="left:426.12px;top:566.65px;letter-spacing:0.100px;">134.8</span>
<span class="t g" style="left:474.32px;top:566.65px;letter-spacing:0.100px;">513.7</span>
<div class="c" style="left:59px;top:586px;width:441px;height:13px"></div>
<div class="c" style="left:59px;top:586px;width:48px;height:13px"></div>
<div class="c" style="left:107px;top:586px;width:61px;height:13px"></div>
<div class="c" style="left:169px;top:586px;width:80px;height:13px"></div>
<div class="c" style="left:249px;top:586px;width:60px;height:13px"></div>
<div class="c" style="left:310px;top:586px;width:72px;height:13px"></div>
<div class="c" style="left:383px;top:586px;width:68px;height:13px"></div>
<div class="c" style="left:452px;top:586px;width:48px;height:13px"></div>
<span class="t g" style="left:85.18px;top:580.65px;letter-spacing:0.100px;">1996</span>
<span class="t g" style="left:142.72px;top:580.65px;letter-spacing:0.100px;">144.8</span>
<span class="t g" style="left:227.95px;top:580.65px;letter-spacing:0.100px;">72.9</span>
<span class="t g" style="left:289.38px;top:580.65px;letter-spacing:0.100px;">11.0</span>
<span class="t g" style="left:357.12px;top:580.65px;letter-spacing:0.100px;">101.5</span>
<span class="t g" style="left:430.95px;top:580.65px;letter-spacing:0.100px;">79.6</span>
<span class="t g" style="left:474.32px;top:580.65px;letter-spacing:0.100px;">410.5</span>
<div class="c" style="left:59px;top:600px;width:441px;height:13px"></div>
<div class="c" style="left:59px;top:600px;width:48px;height:13px"></div>
<div class="c" style="left:107px;top:600px;width:61px;height:13px"></div>
<div class="c" style="left:169px;top:600px;width:80px;height:13px"></div>
<div class="c" style="left:249px;top:600px;width:60px;height:13px"></div>
<div class="c" style="left:310px;top:600px;width:72px;height:13px"></div>
<div class="c" style="left:383px;top:600px;width:68px;height:13px"></div>
<div class="c" style="left:452px;top:600px;width:48px;height:13px"></div>
<span class="t g" style="left:85.18px;top:594.65px;letter-spacing:0.100px;">1997</span>
<span class="t g" style="left:142.72px;top:594.65px;letter-spacing:0.100px;">145.1</span>
<span class="t g" style="left:227.95px;top:594.65px;letter-spacing:0.100px;">73.5</span>
<span class="t g" style="left:293.57px;top:594.65px;letter-spacing:0.100px;">6.3</span>
<span class="t g" style="left:357.12px;top:594.65px;letter-spacing:0.100px;">100.4</span>
<span class="t g" style="left:426.12px;top:594.65px;letter-spacing:0.100px;">191.8</span>
<span class="t g" style="left:474.32px;top:594.65px;letter-spacing:0.100px;">518.2</span>
<div class="c" style="left:59px;top:614px;width:441px;height:14px"></div>
<div class="c" style="left:59px;top:614px;width:48px;height:14px"></div>
<div class="c" style="left:107px;top:614px;width:61px;height:14px"></div>
<div class="c" style="left:169px;top:614px;width:80px;height:14px"></div>
<div class="c" style="left:249px;top:614px;width:60px;height:14px"></div>
<div class="c" style="left:310px;top:614px;width:72px;height:14px"></div>
<div class="c" style="left:383px;top:614px;width:68px;height:14px"></div>
<div class="c" style="left:452px;top:614px;width:48px;height:14px"></div>
<span class="t g" style="left:85.18px;top:608.65px;letter-spacing:0.100px;">1998</span>
<span class="t g" style="left:142.72px;top:608.65px;letter-spacing:0.100px;">141.1</span>
<span class="t g" style="left:227.95px;top:608.65px;letter-spacing:0.100px;">75.2</span>
<span class="t g" style="left:293.57px;top:608.65px;letter-spacing:0.100px;">9.3</span>
<span class="t g" style="left:361.95px;top:608.65px;letter-spacing:0.100px;">96.3</span>
<span class="t g" style="left:426.12px;top:608.65px;letter-spacing:0.100px;">234.3</span>
<span class="t g" style="left:474.32px;top:608.65px;letter-spacing:0.100px;">557.2</span>
<div class="c" style="left:59px;top:629px;width:441px;height:13px"></div>
<div class="c" style="left:59px;top:629px;width:48px;height:13px"></div>
<div class="c" style="left:107px;top:629px;width:61px;height:13px"></div>
<div class="c" style="left:169px;top:629px;width:80px;height:13px"></div>
<div class="c" style="left:249px;top:629px;width:60px;height:13px"></div>
<div class="c" style="left:310px;top:629px;width:72px;height:13px"></div>
<div class="c" style="left:383px;top:629px;width:68px;height:13px"></div>
<div class="c" style="left:452px;top:629px;width:48px;height:13px"></div>
<span class="t g" style="left:85.18px;top:623.65px;letter-spacing:0.100px;">1999</span>
<span class="t g" style="left:142.72px;top:623.65px;letter-spacing:0.100px;">140.3</span>
<span class="t g" style="left:227.95px;top:623.65px;letter-spacing:0.100px;">79.7</span>
<span class="t g" style="left:293.57px;top:623.65px;letter-spacing:0.100px;">3.0</span>
<span class="t g" style="left:357.12px;top:623.65px;letter-spacing:0.100px;">100.3</span>
<span class="t g" style="left:426.12px;top:623.65px;letter-spacing:0.100px;">269.6</span>
<span class="t g" style="left:474.32px;top:623.65px;letter-spacing:0.100px;">601.4</span>
<div class="c" style="left:59px;top:643px;width:441px;height:13px"></div>
<div class="c" style="left:59px;top:643px;width:48px;height:13px"></div>
<div class="c" style="left:107px;top:643px;width:61px;height:13px"></div>
<div class="c" style="left:169px;top:643px;width:80px;height:13px"></div>
<div class="c" style="left:249px;top:643px;width:60px;height:13px"></div>
<div class="c" style="left:310px;top:643px;width:72px;height:13px"></div>
<div class="c" style="left:383px;top:643px;width:68px;height:13px"></div>
<div class="c" style="left:452px;top:643px;width:48px;height:13px"></div>
<span class="t g" style="left:85.18px;top:637.65px;letter-spacing:0.100px;">2000</span>
<span class="t g" style="left:142.72px;top:637.65px;letter-spacing:0.100px;">137.1</span>
<span class="t g" style="left:227.95px;top:637.65px;letter-spacing:0.100px;">74.2</span>
<span class="t g" style="left:293.57px;top:637.65px;letter-spacing:0.100px;">2.2</span>
<span class="t g" style="left:361.95px;top:637.65px;letter-spacing:0.100px;">97.8</span>
<span class="t g" style="left:426.12px;top:637.65px;letter-spacing:0.100px;">224.8</span>
<span class="t g" style="left:474.32px;top:637.65px;letter-spacing:0.100px;">536.6</span>
<div class="c" style="left:59px;top:657px;width:441px;height:13px"></div>
<div class="c" style="left:59px;top:657px;width:48px;height:13px"></div>
<div class="c" style="left:107px;top:657px;width:61px;height:13px"></div>
<div class="c" style="left:169px;top:657px;width:80px;height:13px"></div>
<div class="c" style="left:249px;top:657px;width:60px;height:13px"></div>
<div class="c" style="left:310px;top:657px;width:72px;height:13px"></div>
<div class="c" style="left:383px;top:657px;width:68px;height:13px"></div>
<div class="c" style="left:452px;top:657px;width:48px;height:13px"></div>
<span class="t g" style="left:85.18px;top:651.65px;letter-spacing:0.100px;">2001</span>
<span class="t g" style="left:142.72px;top:651.65px;letter-spacing:0.100px;">152.1</span>
<span class="t g" style="left:227.95px;top:651.65px;letter-spacing:0.100px;">72.3</span>
<span class="t g" style="left:293.57px;top:651.65px;letter-spacing:0.100px;">6.8</span>
<span class="t g" style="left:357.12px;top:651.65px;letter-spacing:0.100px;">105.4</span>
<span class="t g" style="left:426.12px;top:651.65px;letter-spacing:0.100px;">377.1</span>
<span class="t g" style="left:474.32px;top:651.65px;letter-spacing:0.100px;">716.3</span>
<div class="c" style="left:59px;top:671px;width:441px;height:14px"></div>
<div class="c" style="left:59px;top:671px;width:48px;height:14px"></div>
<div class="c" style="left:107px;top:671px;width:61px;height:14px"></div>
<div class="c" style="left:169px;top:671px;width:80px;height:14px"></div>
<div class="c" style="left:249px;top:671px;width:60px;height:14px"></div>
<div class="c" style="left:310px;top:671px;width:72px;height:14px"></div>
<div class="c" style="left:383px;top:671px;width:68px;height:14px"></div>
<div class="c" style="left:452px;top:671px;width:48px;height:14px"></div>
<span class="t g" style="left:85.18px;top:665.65px;letter-spacing:0.100px;">2002</span>
<span class="t g" style="left:142.72px;top:665.65px;letter-spacing:0.100px;">150.0</span>
<span class="t g" style="left:227.95px;top:665.65px;letter-spacing:0.100px;">75.5</span>
<span class="t g" style="left:288.75px;top:665.65px;letter-spacing:0.100px;">16.4</span>
<span class="t g" style="left:357.76px;top:665.65px;letter-spacing:0.100px;">115.4</span>
<span class="t g" style="left:426.12px;top:665.65px;letter-spacing:0.100px;">434.5</span>
<span class="t g" style="left:474.32px;top:665.65px;letter-spacing:0.100px;">802.6</span>
<div class="c" style="left:59px;top:686px;width:441px;height:13px"></div>
<div class="c" style="left:59px;top:686px;width:48px;height:13px"></div>
<div class="c" style="left:107px;top:686px;width:61px;height:13px"></div>
<div class="c" style="left:169px;top:686px;width:80px;height:13px"></div>
<div class="c" style="left:249px;top:686px;width:60px;height:13px"></div>
<div class="c" style="left:310px;top:686px;width:72px;height:13px"></div>
<div class="c" style="left:383px;top:686px;width:68px;height:13px"></div>
<div class="c" style="left:452px;top:686px;width:48px;height:13px"></div>
<span class="t g" style="left:85.18px;top:680.65px;letter-spacing:0.100px;">2003</span>
<span class="t g" style="left:152.37px;top:680.65px;letter-spacing:0.100px;">3.2</span>
<span class="t g" style="left:227.95px;top:680.65px;letter-spacing:0.100px;">75.3</span>
<span class="t g" style="left:293.57px;top:680.65px;letter-spacing:0.100px;">6.2</span>
<span class="t g" style="left:357.12px;top:680.65px;letter-spacing:0.100px;">121.8</span>
<span class="t g" style="left:426.12px;top:680.65px;letter-spacing:0.100px;">455.6</span>
<span class="t g" style="left:474.32px;top:680.65px;letter-spacing:0.100px;">662.8</span>
<div class="c" style="left:59px;top:700px;width:441px;height:13px"></div>
<div class="c" style="left:59px;top:700px;width:48px;height:13px"></div>
<div class="c" style="left:107px;top:700px;width:61px;height:13px"></div>
<div class="c" style="left:169px;top:700px;width:80px;height:13px"></div>
<div class="c" style="left:249px;top:700px;width:60px;height:13px"></div>
<div class="c" style="left:310px;top:700px;width:72px;height:13px"></div>
<div class="c" style="left:383px;top:700px;width:68px;height:13px"></div>
<div class="c" style="left:452px;top:700px;width:48px;height:13px"></div>
<span class="t g" style="left:85.18px;top:694.65px;letter-spacing:0.100px;">2004</span>
<span class="t g" style="left:152.37px;top:694.65px;letter-spacing:0.100px;">3.7</span>
<span class="t g" style="left:227.95px;top:694.65px;letter-spacing:0.100px;">78.0</span>
<span class="t g" style="left:288.75px;top:694.65px;letter-spacing:0.100px;">10.0</span>
<span class="t g" style="left:357.12px;top:694.65px;letter-spacing:0.100px;">145.3</span>
<span class="t g" style="left:426.12px;top:694.65px;letter-spacing:0.100px;">419.7</span>
<span class="t g" style="left:474.32px;top:694.65px;letter-spacing:0.100px;">676.8</span>
<div class="c" style="left:59px;top:714px;width:441px;height:14px"></div>
<div class="c" style="left:59px;top:714px;width:48px;height:14px"></div>
<div class="c" style="left:107px;top:714px;width:61px;height:14px"></div>
<div class="c" style="left:169px;top:714px;width:80px;height:14px"></div>
<div class="c" style="left:249px;top:714px;width:60px;height:14px"></div>
<div class="c" style="left:310px;top:714px;width:72px;height:14px"></div>
<div class="c" style="left:383px;top:714px;width:68px;height:14px"></div>
<div class="c" style="left:452px;top:714px;width:48px;height:14px"></div>
<span class="t g" style="left:85.18px;top:708.65px;letter-spacing:0.100px;">2005</span>
<span class="t g" style="left:152.37px;top:708.65px;letter-spacing:0.100px;">3.8</span>
<span class="t g" style="left:227.95px;top:708.65px;letter-spacing:0.100px;">75.8</span>
<span class="t g" style="left:293.57px;top:708.65px;letter-spacing:0.100px;">3.8</span>
<span class="t g" style="left:357.12px;top:708.65px;letter-spacing:0.100px;">155.6</span>
<span class="t g" style="left:426.12px;top:708.65px;letter-spacing:0.100px;">372.4</span>
<span class="t g" style="left:474.32px;top:708.65px;letter-spacing:0.100px;">626.5</span>
<span class="t g" style="left:141.53px;top:181.05px;letter-spacing:0.266px;">---------------------------------</span>
<span class="t g" style="left:243.13px;top:181.05px;letter-spacing:0.046px;word-spacing:1.5px;">Millions of Dollars</span>
<span class="t g" style="left:313.53px;top:181.05px;letter-spacing:0.174px;">-------------------------</span>
<span class="t g" style="left:388.03px;top:181.05px;letter-spacing:-0.321px;">- - -</span>
<div style="left:64px;top:103px;width:17px;height:15px;border:1px solid #e9e9e9;border-radius:3px;background:rgba(240,240,240,0.25);opacity:0.8"></div>
<svg style="left:67px;top:108px;opacity:0.8" width="11" height="6" viewBox="0 0 11 6"><path d="M0.3 0.3 L10.3 0.3 L5.3 5.6 Z" fill="#e9a3a9"/></svg>
<div style="left:8px;top:818px;width:560px;height:748px;border:1px solid #a0a0a0;background:#fff"></div>
<div style="left:17px;top:826px;width:17px;height:15px;border:1px solid #e9e9e9;border-radius:3px;background:#fff;opacity:1.0"></div>
<svg style="left:20px;top:831px;opacity:1.0" width="11" height="6" viewBox="0 0 11 6"><path d="M0.3 0.3 L10.3 0.3 L5.3 5.6 Z" fill="#e9a3a9"/></svg>
<div style="left:55px;top:867px;width:449px;height:65px;background:#7a7a7a"></div>
<div style="left:58px;top:870px;width:443px;height:59px;background:#ebebeb"></div>
<div class="c" style="left:59px;top:870px;width:442px;height:59px"></div>
<div style="left:59px;top:872px;width:48px;height:85px;border-left:1px solid #2962ff;border-right:1px solid #2962ff"></div>
<div style="left:107px;top:872px;width:61px;height:85px;border-left:1px solid #2962ff;border-right:1px solid #2962ff"></div>
<div style="left:169px;top:872px;width:80px;height:85px;border-left:1px solid #2962ff;border-right:1px solid #2962ff"></div>
<div style="left:249px;top:872px;width:60px;height:85px;border-left:1px solid #2962ff;border-right:1px solid #2962ff"></div>
<div style="left:310px;top:872px;width:72px;height:85px;border-left:1px solid #2962ff;border-right:1px solid #2962ff"></div>
<div style="left:383px;top:872px;width:68px;height:85px;border-left:1px solid #2962ff;border-right:1px solid #2962ff"></div>
<div style="left:452px;top:872px;width:48px;height:85px;border-left:1px solid #2962ff;border-right:1px solid #2962ff"></div>
<div class="c" style="left:59px;top:872px;width:441px;height:14px"></div>
<div class="c" style="left:59px;top:872px;width:48px;height:14px"></div>
<div class="c" style="left:107px;top:872px;width:61px;height:14px"></div>
<div class="c" style="left:169px;top:872px;width:80px;height:14px"></div>
<div class="c" style="left:249px;top:872px;width:60px;height:14px"></div>
<div class="c" style="left:310px;top:872px;width:72px;height:14px"></div>
<div class="c" style="left:383px;top:872px;width:68px;height:14px"></div>
<div class="c" style="left:452px;top:872px;width:48px;height:14px"></div>
<span class="t g" style="left:85.18px;top:866.65px;letter-spacing:0.100px;">2006</span>
<span class="t g" style="left:152.37px;top:866.65px;letter-spacing:0.100px;">2.9</span>
<span class="t g" style="left:227.95px;top:866.65px;letter-spacing:0.100px;">75.6</span>
<span class="t g" style="left:293.57px;top:866.65px;letter-spacing:0.100px;">2.8</span>
<span class="t g" style="left:357.12px;top:866.65px;letter-spacing:0.100px;">131.0</span>
<span class="t g" style="left:426.12px;top:866.65px;letter-spacing:0.100px;">300.4</span>
<span class="t g" style="left:474.32px;top:866.65px;letter-spacing:0.100px;">529.0</span>
<div class="c" style="left:59px;top:887px;width:441px;height:13px"></div>
<div class="c" style="left:59px;top:887px;width:48px;height:13px"></div>
<div class="c" style="left:107px;top:887px;width:61px;height:13px"></div>
<div class="c" style="left:169px;top:887px;width:80px;height:13px"></div>
<div class="c" style="left:249px;top:887px;width:60px;height:13px"></div>
<div class="c" style="left:310px;top:887px;width:72px;height:13px"></div>
<div class="c" style="left:383px;top:887px;width:68px;height:13px"></div>
<div class="c" style="left:452px;top:887px;width:48px;height:13px"></div>
<span class="t g" style="left:85.18px;top:881.65px;letter-spacing:0.100px;">2007</span>
<span class="t g" style="left:152.37px;top:881.65px;letter-spacing:0.100px;">2.6</span>
<span class="t g" style="left:227.95px;top:881.65px;letter-spacing:0.100px;">80.8</span>
<span class="t g" style="left:293.57px;top:881.65px;letter-spacing:0.100px;">0.0</span>
<span class="t g" style="left:357.12px;top:881.65px;letter-spacing:0.100px;">142.1</span>
<span class="t g" style="left:426.12px;top:881.65px;letter-spacing:0.100px;">255.4</span>
<span class="t g" style="left:474.32px;top:881.65px;letter-spacing:0.100px;">488.0</span>
<div class="c" style="left:59px;top:901px;width:441px;height:13px"></div>
<div class="c" style="left:59px;top:901px;width:48px;height:13px"></div>
<div class="c" style="left:107px;top:901px;width:61px;height:13px"></div>
<div class="c" style="left:169px;top:901px;width:80px;height:13px"></div>
<div class="c" style="left:249px;top:901px;width:60px;height:13px"></div>
<div class="c" style="left:310px;top:901px;width:72px;height:13px"></div>
<div class="c" style="left:383px;top:901px;width:68px;height:13px"></div>
<div class="c" style="left:452px;top:901px;width:48px;height:13px"></div>
<span class="t g" style="left:85.18px;top:895.65px;letter-spacing:0.100px;">2008</span>
<span class="t g" style="left:152.37px;top:895.65px;letter-spacing:0.100px;">2.4</span>
<span class="t g" style="left:227.95px;top:895.65px;letter-spacing:0.100px;">96.5</span>
<span class="t g" style="left:293.57px;top:895.65px;letter-spacing:0.100px;">0.0</span>
<span class="t g" style="left:357.12px;top:895.65px;letter-spacing:0.100px;">160.9</span>
<span class="t g" style="left:426.12px;top:895.65px;letter-spacing:0.100px;">283.0</span>
<span class="t g" style="left:474.32px;top:895.65px;letter-spacing:0.100px;">543.0</span>
<div style="left:64px;top:875px;width:17px;height:15px;border:1px solid #e9e9e9;border-radius:3px;background:rgba(240,240,240,0.25);opacity:0.8"></div>
<svg style="left:67px;top:880px;opacity:0.8" width="11" height="6" viewBox="0 0 11 6"><path d="M0.3 0.3 L10.3 0.3 L5.3 5.6 Z" fill="#e9a3a9"/></svg>
</div>
<div style="left:529px;top:46px;width:21px;height:866px;background:#f0f0f0"></div>
<div style="left:529px;top:67px;width:21px;height:467px;background:#cdcdcd"></div>
<svg style="left:534px;top:53px" width="11" height="9" viewBox="0 0 11 9"><path d="M1.3 7.4 L5.5 2 L9.7 7.4" fill="none" stroke="#8e8e8e" stroke-width="1.8"/></svg>
<svg style="left:534px;top:903px" width="11" height="9" viewBox="0 0 11 9"><path d="M1.3 1.6 L5.5 7 L9.7 1.6" fill="none" stroke="#8e8e8e" stroke-width="1.8"/></svg>
<div style="left:558px;top:4px;width:4px;height:908px;background:#b4b4b4"></div>
<svg style="left:564px;top:13px" width="15" height="15" viewBox="0 0 15 15"><path d="M12.4 3.2 L12.4 12 L2.8 12 Z" fill="#bfbfbf" stroke="#878787" stroke-width="1.5" stroke-linejoin="round"/></svg>
<div style="left:578px;top:7px;width:722px;height:27px;border:1px solid #c6c6c6;background:#ececec"></div>
<span class="t" style="left:580.01px;top:10.96px;font-size:18px;font-weight:700;letter-spacing:0.698px;">Table</span>
<div style="left:579px;top:38px;width:225px;height:25px;border:1px solid #6a6a6a;background:#e1e1e1"></div>
<span class="t h" style="left:629.73px;top:40.22px;transform:scaleX(0.9600) skewX(.05deg);">Auto-detect tables</span>
<div style="left:579px;top:68px;width:225px;height:25px;border:1px solid #6a6a6a;background:#e1e1e1"></div>
<span class="t h" style="left:637.56px;top:70.52px;transform:scaleX(0.9530) skewX(.05deg);">Ignore all tables</span>
<svg style="left:809.4px;top:39.2px" width="16" height="16" viewBox="0 0 16 16"><circle cx="8" cy="8" r="7" fill="#fff" stroke="#4d4d4d" stroke-width="1"/></svg>
<svg style="left:809.4px;top:59.2px" width="16" height="16" viewBox="0 0 16 16"><circle cx="8" cy="8" r="7" fill="#fff" stroke="#4d4d4d" stroke-width="1"/></svg>
<svg style="left:809.4px;top:78.2px" width="16" height="16" viewBox="0 0 16 16"><circle cx="8" cy="8" r="7" fill="#fff" stroke="#4d4d4d" stroke-width="1"/><circle cx="8" cy="8" r="4.1" fill="#222"/></svg>
<span class="t h" style="left:832.23px;top:36.52px;transform:scaleX(0.9373) skewX(.05deg);">Concatenate all tables into one</span>
<span class="t h" style="left:832.23px;top:57.02px;transform:scaleX(0.9577) skewX(.05deg);">Individual tables</span>
<span class="t h" style="left:832.23px;top:75.62px;transform:scaleX(0.9297) skewX(.05deg);">Concatenate tables with matching column names</span>
<span class="t h" style="left:581.73px;top:101.17px;transform:scaleX(0.9732) skewX(.05deg);">Minimum column count</span>
<span class="t h" style="left:581.73px;top:130.62px;transform:scaleX(0.9750) skewX(.05deg);">Minimum row count</span>
<span class="t h" style="left:581.73px;top:160.92px;transform:scaleX(0.9538) skewX(.05deg);">Number of data tables</span>
<div style="left:750px;top:102px;width:31px;height:23px;border:1px solid #5a5a5a;background:#fff"></div>
<span class="t h" style="left:765.94px;top:101.12px;transform:scaleX(0.9006) skewX(.05deg);">2</span>
<div style="left:782px;top:102px;width:19px;height:12px;border:1px solid #c3d1e6;background:linear-gradient(#f2f6fb,#dde6f3);border-radius:1px"></div>
<div style="left:782px;top:114px;width:19px;height:12px;border:1px solid #c3d1e6;background:linear-gradient(#f2f6fb,#dde6f3);border-radius:1px"></div>
<svg style="left:787px;top:105px" width="9" height="6" viewBox="0 0 9 6"><path d="M4.5 0.8 L7.6 4.9 L1.4 4.9 Z" fill="#1c2742"/></svg>
<svg style="left:787px;top:117px" width="9" height="6" viewBox="0 0 9 6"><path d="M4.5 5.2 L7.6 1.1 L1.4 1.1 Z" fill="#1c2742"/></svg>
<div style="left:750px;top:132px;width:31px;height:23px;border:1px solid #5a5a5a;background:#fff"></div>
<span class="t h" style="left:765.94px;top:131.12px;transform:scaleX(0.9006) skewX(.05deg);">3</span>
<div style="left:782px;top:132px;width:19px;height:12px;border:1px solid #c3d1e6;background:linear-gradient(#f2f6fb,#dde6f3);border-radius:1px"></div>
<div style="left:782px;top:144px;width:19px;height:12px;border:1px solid #c3d1e6;background:linear-gradient(#f2f6fb,#dde6f3);border-radius:1px"></div>
<svg style="left:787px;top:135px" width="9" height="6" viewBox="0 0 9 6"><path d="M4.5 0.8 L7.6 4.9 L1.4 4.9 Z" fill="#1c2742"/></svg>
<svg style="left:787px;top:147px" width="9" height="6" viewBox="0 0 9 6"><path d="M4.5 5.2 L7.6 1.1 L1.4 1.1 Z" fill="#1c2742"/></svg>
<span class="t h" style="left:787.00px;top:160.92px;transform:scaleX(0.9006) skewX(.05deg);">2</span>
<div style="left:577px;top:188px;width:723px;height:752px;border:1px solid #9e9e9e"></div>
<div style="left:877px;top:195px;width:146px;height:29px;border:1px solid #b2b2b2;background:linear-gradient(#efefef,#e3e3e3)"></div>
<span class="t h" style="left:884.53px;top:198.82px;transform:scaleX(0.8991) skewX(.05deg);">Page(1)  Table(1)</span>
<svg style="left:1006px;top:203.8px" width="10" height="8" viewBox="0 0 10 8"><path d="M2.1 1.9 L5.4 5.7 L8.7 1.9" fill="none" stroke="#555" stroke-width="1.6"/></svg>
<div style="left:578px;top:226px;width:722px;height:1px;background:#a8a8a8"></div>
<div style="left:582px;top:229px;width:718px;height:5px;background:#d5d5d5"></div>
<div style="left:688px;top:283px;width:612px;height:657px;background:#fff"></div>
<div style="left:687px;top:234px;width:1px;height:706px;background:#a9a9a9"></div>
<div style="left:1003px;top:234px;width:1px;height:49px;background:#bdbdbd"></div>
<div style="left:1003px;top:283px;width:1px;height:657px;background:#d6d6e2"></div>
<div style="left:582px;top:282px;width:718px;height:1px;background:#a9a9a9"></div>
<svg style="left:582px;top:234px" width="106" height="49" viewBox="0 0 106 49"><path d="M8 0 L105.5 48.5" stroke="#b4b4b4" stroke-width="1" fill="none"/></svg>
<svg style="left:663px;top:255px" width="16" height="16" viewBox="0 0 16 16"><rect x="0.8" y="1" width="1.3" height="14" fill="#a3acc8"/><rect x="2.6" y="3" width="7.6" height="2.1" fill="#8fa08f"/><rect x="2.6" y="6.8" width="11.2" height="2.1" fill="#8fa08f"/><rect x="2.6" y="10.6" width="5.6" height="2.1" fill="#8fa08f"/></svg>
<span class="t" style="left:691.20px;top:260.74px;font-size:14.6px;font-weight:700;letter-spacing:-0.130px;transform:skewX(.05deg);">COST OF FOOD DISTRIBUTION PROGRAMS</span>
<span class="t" style="left:1012.70px;top:240.74px;font-size:14.6px;font-weight:700;letter-spacing:-0.130px;transform:skewX(.05deg);">COST OF FOOD DISTRIBUTION PROGRAMS</span>
<span class="t" style="left:1161.14px;top:260.74px;font-size:14.6px;font-weight:700;transform:skewX(.05deg);">2</span>
<div style="left:582px;top:306px;width:105px;height:1px;background:#a9a9a9"></div>
<div style="left:688px;top:306px;width:612px;height:1px;background:#d6d6e2"></div>
<span class="t h" style="left:671.54px;top:282.62px;transform:scaleX(0.9006) skewX(.05deg);">1</span>
<span class="t h" style="left:691.23px;top:282.62px;transform:scaleX(0.9134) skewX(.05deg);">(Data as of March 08, 2019)</span>
<span class="t h" style="left:1006.93px;top:282.62px;transform:scaleX(0.9134) skewX(.05deg);">(Data as of March 08, 2019)</span>
<div style="left:582px;top:329px;width:105px;height:1px;background:#a9a9a9"></div>
<div style="left:688px;top:329px;width:612px;height:1px;background:#d6d6e2"></div>
<span class="t h" style="left:671.54px;top:306.37px;transform:scaleX(0.9006) skewX(.05deg);">2</span>
<span class="t h" style="left:1007.70px;top:306.37px;transform:scaleX(0.8696) skewX(.05deg);">Nutrition</span>
<div style="left:582px;top:353px;width:105px;height:1px;background:#a9a9a9"></div>
<div style="left:688px;top:353px;width:612px;height:1px;background:#d6d6e2"></div>
<span class="t h" style="left:671.54px;top:330.12px;transform:scaleX(0.9006) skewX(.05deg);">3</span>
<span class="t h" style="left:1007.70px;top:330.12px;transform:scaleX(0.8696) skewX(.05deg);">Services</span>
<div style="left:582px;top:377px;width:105px;height:1px;background:#a9a9a9"></div>
<div style="left:688px;top:377px;width:612px;height:1px;background:#d6d6e2"></div>
<span class="t h" style="left:671.54px;top:353.87px;transform:scaleX(0.9006) skewX(.05deg);">4</span>
<span class="t h" style="left:692.00px;top:353.87px;transform:scaleX(0.8696) skewX(.05deg);">Fiscal</span>
<span class="t h" style="left:1007.70px;top:353.87px;transform:scaleX(0.8696) skewX(.05deg);">Incentive</span>
<div style="left:582px;top:401px;width:105px;height:1px;background:#a9a9a9"></div>
<div style="left:688px;top:401px;width:612px;height:1px;background:#d6d6e2"></div>
<span class="t h" style="left:671.54px;top:377.62px;transform:scaleX(0.9006) skewX(.05deg);">5</span>
<span class="t h" style="left:692.00px;top:377.62px;transform:scaleX(0.8696) skewX(.05deg);">Year</span>
<span class="t h" style="left:1007.70px;top:377.62px;transform:scaleX(0.8696) skewX(.05deg);">Prog. 1]</span>
<div style="left:582px;top:424px;width:105px;height:1px;background:#a9a9a9"></div>
<div style="left:688px;top:424px;width:612px;height:1px;background:#d6d6e2"></div>
<span class="t h" style="left:671.54px;top:401.37px;transform:scaleX(0.9006) skewX(.05deg);">6</span>
<span class="t h" style="left:702.98px;top:401.37px;transform:scaleX(1.1537) skewX(.05deg);">---------------------------------</span>
<span class="t h" style="left:906.23px;top:401.37px;transform:scaleX(0.9844) skewX(.05deg);">Millions of ...</span>
<span class="t h" style="left:1018.23px;top:401.37px;transform:scaleX(1.1537) skewX(.05deg);">---------------------------------</span>
<span class="t h" style="left:1222.93px;top:401.37px;transform:scaleX(0.9696) skewX(.05deg);">Millions</span>
<span class="t h" style="left:1279.50px;top:401.37px;transform:scaleX(0.8696) skewX(.05deg);">of Dollars</span>
<div style="left:582px;top:448px;width:105px;height:1px;background:#a9a9a9"></div>
<div style="left:688px;top:448px;width:612px;height:1px;background:#d6d6e2"></div>
<span class="t h" style="left:671.54px;top:425.12px;transform:scaleX(0.9006) skewX(.05deg);">7</span>
<span class="t h" style="left:691.23px;top:425.12px;transform:scaleX(0.9086) skewX(.05deg);">1969</span>
<span class="t h" style="left:1006.93px;top:425.12px;transform:scaleX(1.1326) skewX(.05deg);">--</span>
<div style="left:582px;top:472px;width:105px;height:1px;background:#a9a9a9"></div>
<div style="left:688px;top:472px;width:612px;height:1px;background:#d6d6e2"></div>
<span class="t h" style="left:671.54px;top:448.87px;transform:scaleX(0.9006) skewX(.05deg);">8</span>
<span class="t h" style="left:691.23px;top:448.87px;transform:scaleX(0.9086) skewX(.05deg);">1970</span>
<span class="t h" style="left:1006.93px;top:448.87px;transform:scaleX(1.1326) skewX(.05deg);">--</span>
<div style="left:582px;top:496px;width:105px;height:1px;background:#a9a9a9"></div>
<div style="left:688px;top:496px;width:612px;height:1px;background:#d6d6e2"></div>
<span class="t h" style="left:671.54px;top:472.62px;transform:scaleX(0.9006) skewX(.05deg);">9</span>
<span class="t h" style="left:691.23px;top:472.62px;transform:scaleX(0.9086) skewX(.05deg);">1971</span>
<span class="t h" style="left:1006.93px;top:472.62px;transform:scaleX(1.1326) skewX(.05deg);">--</span>
<div style="left:582px;top:519px;width:105px;height:1px;background:#a9a9a9"></div>
<div style="left:688px;top:519px;width:612px;height:1px;background:#d6d6e2"></div>
<span class="t h" style="left:663.47px;top:496.37px;transform:scaleX(0.9006) skewX(.05deg);">10</span>
<span class="t h" style="left:691.23px;top:496.37px;transform:scaleX(0.9086) skewX(.05deg);">1972</span>
<span class="t h" style="left:1006.93px;top:496.37px;transform:scaleX(1.1326) skewX(.05deg);">--</span>
<div style="left:582px;top:543px;width:105px;height:1px;background:#a9a9a9"></div>
<div style="left:688px;top:543px;width:612px;height:1px;background:#d6d6e2"></div>
<span class="t h" style="left:664.54px;top:520.12px;transform:scaleX(0.9006) skewX(.05deg);">11</span>
<span class="t h" style="left:691.23px;top:520.12px;transform:scaleX(0.9086) skewX(.05deg);">1973</span>
<span class="t h" style="left:1006.93px;top:520.12px;transform:scaleX(1.1326) skewX(.05deg);">--</span>
<div style="left:582px;top:567px;width:105px;height:1px;background:#a9a9a9"></div>
<div style="left:688px;top:567px;width:612px;height:1px;background:#d6d6e2"></div>
<span class="t h" style="left:663.47px;top:543.87px;transform:scaleX(0.9006) skewX(.05deg);">12</span>
<span class="t h" style="left:691.23px;top:543.87px;transform:scaleX(0.9086) skewX(.05deg);">1974</span>
<span class="t h" style="left:1006.93px;top:543.87px;transform:scaleX(1.1326) skewX(.05deg);">--</span>
<div style="left:582px;top:591px;width:105px;height:1px;background:#a9a9a9"></div>
<div style="left:688px;top:591px;width:612px;height:1px;background:#d6d6e2"></div>
<span class="t h" style="left:663.47px;top:567.62px;transform:scaleX(0.9006) skewX(.05deg);">13</span>
<span class="t h" style="left:691.23px;top:567.62px;transform:scaleX(0.9086) skewX(.05deg);">1975</span>
<span class="t h" style="left:1007.70px;top:567.62px;transform:scaleX(0.8696) skewX(.05deg);">1.8</span>
<div style="left:582px;top:614px;width:105px;height:1px;background:#a9a9a9"></div>
<div style="left:688px;top:614px;width:612px;height:1px;background:#d6d6e2"></div>
<span class="t h" style="left:663.47px;top:591.37px;transform:scaleX(0.9006) skewX(.05deg);">14</span>
<span class="t h" style="left:691.23px;top:591.37px;transform:scaleX(0.9086) skewX(.05deg);">1976</span>
<span class="t h" style="left:1007.70px;top:591.37px;transform:scaleX(0.8696) skewX(.05deg);">8.7</span>
<div style="left:582px;top:638px;width:105px;height:1px;background:#a9a9a9"></div>
<div style="left:688px;top:638px;width:612px;height:1px;background:#d6d6e2"></div>
<span class="t h" style="left:663.47px;top:615.12px;transform:scaleX(0.9006) skewX(.05deg);">15</span>
<span class="t h" style="left:691.23px;top:615.12px;transform:scaleX(0.9086) skewX(.05deg);">1977</span>
<span class="t h" style="left:1007.70px;top:615.12px;transform:scaleX(0.8696) skewX(.05deg);">18.9</span>
<div style="left:582px;top:662px;width:105px;height:1px;background:#a9a9a9"></div>
<div style="left:688px;top:662px;width:612px;height:1px;background:#d6d6e2"></div>
<span class="t h" style="left:663.47px;top:638.87px;transform:scaleX(0.9006) skewX(.05deg);">16</span>
<span class="t h" style="left:691.23px;top:638.87px;transform:scaleX(0.9086) skewX(.05deg);">1978</span>
<span class="t h" style="left:1007.70px;top:638.87px;transform:scaleX(0.8696) skewX(.05deg);">37.6</span>
<div style="left:582px;top:686px;width:105px;height:1px;background:#a9a9a9"></div>
<div style="left:688px;top:686px;width:612px;height:1px;background:#d6d6e2"></div>
<span class="t h" style="left:663.47px;top:662.62px;transform:scaleX(0.9006) skewX(.05deg);">17</span>
<span class="t h" style="left:691.23px;top:662.62px;transform:scaleX(0.9086) skewX(.05deg);">1979</span>
<span class="t h" style="left:1007.70px;top:662.62px;transform:scaleX(0.8696) skewX(.05deg);">57.8</span>
<div style="left:582px;top:709px;width:105px;height:1px;background:#a9a9a9"></div>
<div style="left:688px;top:709px;width:612px;height:1px;background:#d6d6e2"></div>
<span class="t h" style="left:663.47px;top:686.37px;transform:scaleX(0.9006) skewX(.05deg);">18</span>
<span class="t h" style="left:691.23px;top:686.37px;transform:scaleX(0.9086) skewX(.05deg);">1980</span>
<span class="t h" style="left:1007.70px;top:686.37px;transform:scaleX(0.8696) skewX(.05deg);">74.9</span>
<div style="left:582px;top:733px;width:105px;height:1px;background:#a9a9a9"></div>
<div style="left:688px;top:733px;width:612px;height:1px;background:#d6d6e2"></div>
<span class="t h" style="left:663.47px;top:710.12px;transform:scaleX(0.9006) skewX(.05deg);">19</span>
<span class="t h" style="left:691.23px;top:710.12px;transform:scaleX(0.9086) skewX(.05deg);">1981</span>
<span class="t h" style="left:1007.70px;top:710.12px;transform:scaleX(0.8696) skewX(.05deg);">93.7</span>
<div style="left:582px;top:757px;width:105px;height:1px;background:#a9a9a9"></div>
<div style="left:688px;top:757px;width:612px;height:1px;background:#d6d6e2"></div>
<span class="t h" style="left:663.47px;top:733.87px;transform:scaleX(0.9006) skewX(.05deg);">20</span>
<span class="t h" style="left:691.23px;top:733.87px;transform:scaleX(0.9086) skewX(.05deg);">1982</span>
<span class="t h" style="left:1007.70px;top:733.87px;transform:scaleX(0.8696) skewX(.05deg);">101.9</span>
<div style="left:582px;top:781px;width:105px;height:1px;background:#a9a9a9"></div>
<div style="left:688px;top:781px;width:612px;height:1px;background:#d6d6e2"></div>
<span class="t h" style="left:663.47px;top:757.62px;transform:scaleX(0.9006) skewX(.05deg);">21</span>
<span class="t h" style="left:691.23px;top:757.62px;transform:scaleX(0.9086) skewX(.05deg);">1983</span>
<span class="t h" style="left:1007.70px;top:757.62px;transform:scaleX(0.8696) skewX(.05deg);">119.8</span>
<div style="left:582px;top:804px;width:105px;height:1px;background:#a9a9a9"></div>
<div style="left:688px;top:804px;width:612px;height:1px;background:#d6d6e2"></div>
<span class="t h" style="left:663.47px;top:781.37px;transform:scaleX(0.9006) skewX(.05deg);">22</span>
<span class="t h" style="left:691.23px;top:781.37px;transform:scaleX(0.9086) skewX(.05deg);">1984</span>
<span class="t h" style="left:1007.70px;top:781.37px;transform:scaleX(0.8696) skewX(.05deg);">126.6</span>
<div style="left:582px;top:828px;width:105px;height:1px;background:#a9a9a9"></div>
<div style="left:688px;top:828px;width:612px;height:1px;background:#d6d6e2"></div>
<span class="t h" style="left:663.47px;top:805.12px;transform:scaleX(0.9006) skewX(.05deg);">23</span>
<span class="t h" style="left:691.23px;top:805.12px;transform:scaleX(0.9086) skewX(.05deg);">1985</span>
<span class="t h" style="left:1007.70px;top:805.12px;transform:scaleX(0.8696) skewX(.05deg);">133.7</span>
<div style="left:582px;top:852px;width:105px;height:1px;background:#a9a9a9"></div>
<div style="left:688px;top:852px;width:612px;height:1px;background:#d6d6e2"></div>
<span class="t h" style="left:663.47px;top:828.87px;transform:scaleX(0.9006) skewX(.05deg);">24</span>
<span class="t h" style="left:691.23px;top:828.87px;transform:scaleX(0.9086) skewX(.05deg);">1986</span>
<span class="t h" style="left:1007.70px;top:828.87px;transform:scaleX(0.8696) skewX(.05deg);">137.2</span>
<div style="left:582px;top:876px;width:105px;height:1px;background:#a9a9a9"></div>
<div style="left:688px;top:876px;width:612px;height:1px;background:#d6d6e2"></div>
<span class="t h" style="left:663.47px;top:852.62px;transform:scaleX(0.9006) skewX(.05deg);">25</span>
<span class="t h" style="left:691.23px;top:852.62px;transform:scaleX(0.9086) skewX(.05deg);">1987</span>
<span class="t h" style="left:1007.70px;top:852.62px;transform:scaleX(0.8696) skewX(.05deg);">139.3</span>
<div style="left:582px;top:899px;width:105px;height:1px;background:#a9a9a9"></div>
<div style="left:688px;top:899px;width:612px;height:1px;background:#d6d6e2"></div>
<span class="t h" style="left:663.47px;top:876.37px;transform:scaleX(0.9006) skewX(.05deg);">26</span>
<span class="t h" style="left:691.23px;top:876.37px;transform:scaleX(0.9086) skewX(.05deg);">1988</span>
<span class="t h" style="left:1007.70px;top:876.37px;transform:scaleX(0.8696) skewX(.05deg);">146.1</span>
<div style="left:582px;top:923px;width:105px;height:1px;background:#a9a9a9"></div>
<div style="left:688px;top:923px;width:612px;height:1px;background:#d6d6e2"></div>
<span class="t h" style="left:663.47px;top:900.12px;transform:scaleX(0.9006) skewX(.05deg);">27</span>
<span class="t h" style="left:691.23px;top:900.12px;transform:scaleX(0.9086) skewX(.05deg);">1989</span>
<span class="t h" style="left:1007.70px;top:900.12px;transform:scaleX(0.8696) skewX(.05deg);">144.4</span>
</body></html>
